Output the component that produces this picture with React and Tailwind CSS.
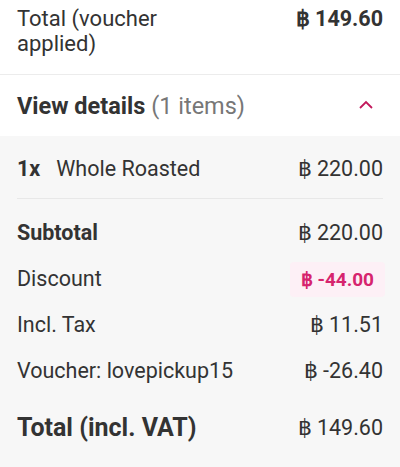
export default function App() {
  return (
    <div className="w-[400px] h-[467px] bg-[#f7f7f7] text-[#333333] overflow-hidden" style={{ fontFamily: "Roboto, 'Liberation Sans', sans-serif" }}>
      <div className="bg-white">
        <div className="flex justify-between items-start px-[17px] pt-[6px] pb-[18px] border-b border-[#ececec]">
          <div className="text-[22px] leading-[25px] w-[180px]">Total (voucher applied)</div>
          <div className="text-[21.5px] leading-[25px] font-bold">฿ 149.60</div>
        </div>
        <div className="flex justify-between items-center px-[17px] pt-[3px] h-[61px]">
          <div className="text-[23.5px]">
            <span className="font-bold">View details</span>{" "}
            <span className="text-[#777777]">(1 items)</span>
          </div>
          <svg width="16" height="10" viewBox="0 0 16 10" className="mr-[9px] mt-[-4px]">
            <path d="M2 8 L8 2 L14 8" fill="none" stroke="#c2185b" strokeWidth="1.8" />
          </svg>
        </div>
      </div>
      <div className="px-[17px]">
        <div className="flex justify-between items-center h-[63px] pt-[4px] border-b border-[#e8e8e8] text-[21.5px]">
          <div><span className="font-bold mr-[16px]">1x</span>Whole Roasted</div>
          <div>฿ 220.00</div>
        </div>
        <div className="pt-[11px]">
          <div className="flex justify-between items-center h-[46px] text-[21.5px]">
            <div className="font-bold">Subtotal</div>
            <div>฿ 220.00</div>
          </div>
          <div className="flex justify-between items-center h-[46px] text-[21.5px]">
            <div>Discount</div>
            <div className="bg-[#fdf0f6] rounded-[4px] px-[11px] py-[6px] leading-[23px] mr-[-2px] text-[#d6246e] font-bold text-[19px]">฿ -44.00</div>
          </div>
          <div className="flex justify-between items-center h-[46px] text-[21.5px]">
            <div>Incl. Tax</div>
            <div>฿ 11.51</div>
          </div>
          <div className="flex justify-between items-center h-[46px] text-[21.5px]">
            <div>Voucher: lovepickup15</div>
            <div>฿ -26.40</div>
          </div>
          <div className="flex justify-between items-center h-[68px]">
            <div className="font-bold text-[25px]">Total (incl. VAT)</div>
            <div className="text-[21.5px]">฿ 149.60</div>
          </div>
        </div>
      </div>
    </div>
  );
}
